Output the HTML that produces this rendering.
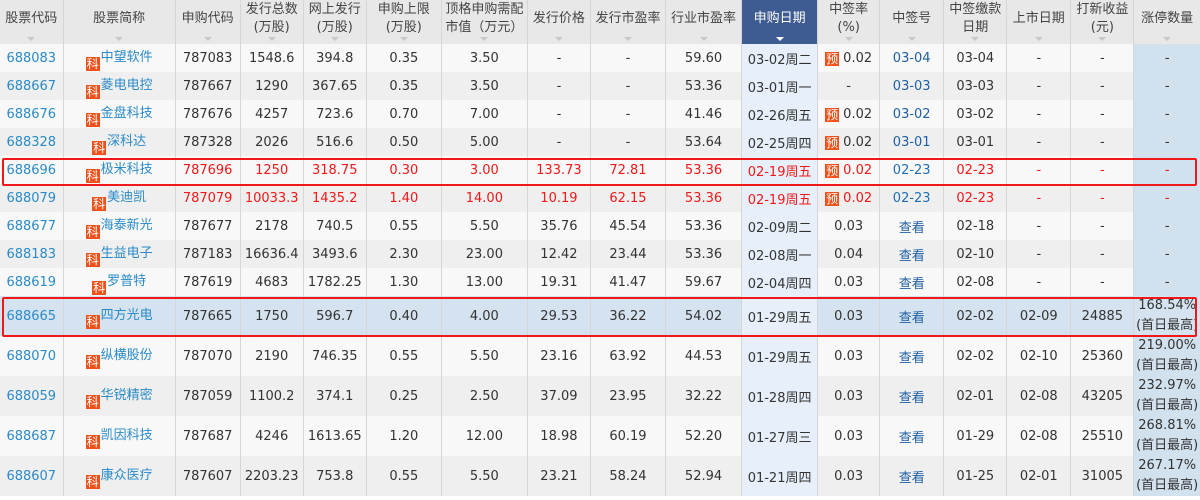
<!DOCTYPE html>
<html><head><meta charset="utf-8"><style>
*{margin:0;padding:0;box-sizing:border-box}
body{width:1200px;height:500px;overflow:hidden;background:#fff;font-family:"DejaVu Sans","Noto Sans CJK SC",sans-serif;font-size:13px;color:#333;position:relative}
table{border-collapse:collapse;table-layout:fixed;width:1200px}
td,th{border-left:1px solid #d6d6d6;text-align:center;white-space:nowrap;overflow:visible;padding:0}
td:first-child,th:first-child{border-left:none}
th{background:#e8e8e8;font-weight:normal;height:44px;color:#444;line-height:18px;position:relative;vertical-align:middle;padding-bottom:6px}
th:after{content:"";position:absolute;left:50%;bottom:3px;margin-left:-4px;border-left:4px solid transparent;border-right:4px solid transparent;border-top:4px solid #c8c8c8}
th.s{background:#3e5b92;color:#fff}
th.s:after{border-top-color:#fff}
tr.r td{height:28px}
tr.t td{height:40px}
tr:nth-child(even) td{background:#f8f8f8}
tr:nth-child(odd) td{background:#efefef}
tr td.d{background:#e7f0fa}
tr td.z{background:#d2e1ee}
tr.h td{background:#d4e3ef}
tr.h td.d{background:#e7f0fa}
.b{color:#2a8bc8}
.q{color:#1f5fa5}
.n{color:#2a8bc8;position:relative}
.k{display:inline-block;width:14px;height:14px;background:#f0501a;color:#fff;font-size:12px;line-height:14px;text-align:center;vertical-align:-7px;margin-right:1px}
.y{display:inline-block;width:14px;height:14px;background:#f0501a;color:#fff;font-size:12px;line-height:14px;text-align:center;vertical-align:-1px;margin-right:4px}
tr.red td{color:#f01818}
tr.red td.b,tr.red td.n{color:#2a8bc8}
tr.red td.q{color:#1f6fb5}
.zt{line-height:20px}
.box{position:absolute;left:2px;width:1195px;border:2px solid #f01818;border-radius:2px}
</style></head><body>
<table>
<colgroup><col style="width:63px"><col style="width:112px"><col style="width:65px"><col style="width:63px"><col style="width:63px"><col style="width:75px"><col style="width:86px"><col style="width:63px"><col style="width:75px"><col style="width:76px"><col style="width:76px"><col style="width:62px"><col style="width:64px"><col style="width:63px"><col style="width:64px"><col style="width:63px"><col style="width:66px"></colgroup>
<tr><th>股票代码</th><th>股票简称</th><th>申购代码</th><th>发行总数<br>(万股)</th><th>网上发行<br>(万股)</th><th>申购上限<br>(万股)</th><th>顶格申购需配<br>市值（万元）</th><th>发行价格</th><th>发行市盈率</th><th>行业市盈率</th><th class="s">申购日期</th><th>中签率<br>(%)</th><th>中签号</th><th>中签缴款<br>日期</th><th>上市日期</th><th>打新收益<br>(元)</th><th>涨停数量</th></tr>
<tr class="r"><td class="b">688083</td><td class="n"><span class="k">科</span>中望软件</td><td>787083</td><td>1548.6</td><td>394.8</td><td>0.35</td><td>3.50</td><td>-</td><td>-</td><td>59.60</td><td class="d">03-02周二</td><td><span class="y">预</span>0.02</td><td class="q">03-04</td><td>03-04</td><td>-</td><td>-</td><td class="z">-</td></tr>
<tr class="r"><td class="b">688667</td><td class="n"><span class="k">科</span>菱电电控</td><td>787667</td><td>1290</td><td>367.65</td><td>0.35</td><td>3.50</td><td>-</td><td>-</td><td>53.36</td><td class="d">03-01周一</td><td>-</td><td class="q">03-03</td><td>03-03</td><td>-</td><td>-</td><td class="z">-</td></tr>
<tr class="r"><td class="b">688676</td><td class="n"><span class="k">科</span>金盘科技</td><td>787676</td><td>4257</td><td>723.6</td><td>0.70</td><td>7.00</td><td>-</td><td>-</td><td>41.46</td><td class="d">02-26周五</td><td><span class="y">预</span>0.02</td><td class="q">03-02</td><td>03-02</td><td>-</td><td>-</td><td class="z">-</td></tr>
<tr class="r"><td class="b">688328</td><td class="n"><span class="k">科</span>深科达</td><td>787328</td><td>2026</td><td>516.6</td><td>0.50</td><td>5.00</td><td>-</td><td>-</td><td>53.64</td><td class="d">02-25周四</td><td><span class="y">预</span>0.02</td><td class="q">03-01</td><td>03-01</td><td>-</td><td>-</td><td class="z">-</td></tr>
<tr class="r red"><td class="b">688696</td><td class="n"><span class="k">科</span>极米科技</td><td>787696</td><td>1250</td><td>318.75</td><td>0.30</td><td>3.00</td><td>133.73</td><td>72.81</td><td>53.36</td><td class="d">02-19周五</td><td><span class="y">预</span>0.02</td><td class="q">02-23</td><td>02-23</td><td>-</td><td>-</td><td class="z">-</td></tr>
<tr class="r red"><td class="b">688079</td><td class="n"><span class="k">科</span>美迪凯</td><td>787079</td><td>10033.3</td><td>1435.2</td><td>1.40</td><td>14.00</td><td>10.19</td><td>62.15</td><td>53.36</td><td class="d">02-19周五</td><td><span class="y">预</span>0.02</td><td class="q">02-23</td><td>02-23</td><td>-</td><td>-</td><td class="z">-</td></tr>
<tr class="r"><td class="b">688677</td><td class="n"><span class="k">科</span>海泰新光</td><td>787677</td><td>2178</td><td>740.5</td><td>0.55</td><td>5.50</td><td>35.76</td><td>45.54</td><td>53.36</td><td class="d">02-09周二</td><td>0.03</td><td class="q">查看</td><td>02-18</td><td>-</td><td>-</td><td class="z">-</td></tr>
<tr class="r"><td class="b">688183</td><td class="n"><span class="k">科</span>生益电子</td><td>787183</td><td>16636.4</td><td>3493.6</td><td>2.30</td><td>23.00</td><td>12.42</td><td>23.44</td><td>53.36</td><td class="d">02-08周一</td><td>0.04</td><td class="q">查看</td><td>02-10</td><td>-</td><td>-</td><td class="z">-</td></tr>
<tr class="r"><td class="b">688619</td><td class="n"><span class="k">科</span>罗普特</td><td>787619</td><td>4683</td><td>1782.25</td><td>1.30</td><td>13.00</td><td>19.31</td><td>41.47</td><td>59.67</td><td class="d">02-04周四</td><td>0.03</td><td class="q">查看</td><td>02-08</td><td>-</td><td>-</td><td class="z">-</td></tr>
<tr class="t h"><td class="b">688665</td><td class="n"><span class="k">科</span>四方光电</td><td>787665</td><td>1750</td><td>596.7</td><td>0.40</td><td>4.00</td><td>29.53</td><td>36.22</td><td>54.02</td><td class="d">01-29周五</td><td>0.03</td><td class="q">查看</td><td>02-02</td><td>02-09</td><td>24885</td><td class="z zt">168.54%<br>(首日最高)</td></tr>
<tr class="t"><td class="b">688070</td><td class="n"><span class="k">科</span>纵横股份</td><td>787070</td><td>2190</td><td>746.35</td><td>0.55</td><td>5.50</td><td>23.16</td><td>63.92</td><td>44.53</td><td class="d">01-29周五</td><td>0.03</td><td class="q">查看</td><td>02-02</td><td>02-10</td><td>25360</td><td class="z zt">219.00%<br>(首日最高)</td></tr>
<tr class="t"><td class="b">688059</td><td class="n"><span class="k">科</span>华锐精密</td><td>787059</td><td>1100.2</td><td>374.1</td><td>0.25</td><td>2.50</td><td>37.09</td><td>23.95</td><td>32.22</td><td class="d">01-28周四</td><td>0.03</td><td class="q">查看</td><td>02-01</td><td>02-08</td><td>43205</td><td class="z zt">232.97%<br>(首日最高)</td></tr>
<tr class="t"><td class="b">688687</td><td class="n"><span class="k">科</span>凯因科技</td><td>787687</td><td>4246</td><td>1613.65</td><td>1.20</td><td>12.00</td><td>18.98</td><td>60.19</td><td>52.20</td><td class="d">01-27周三</td><td>0.03</td><td class="q">查看</td><td>01-29</td><td>02-08</td><td>25510</td><td class="z zt">268.81%<br>(首日最高)</td></tr>
<tr class="t"><td class="b">688607</td><td class="n"><span class="k">科</span>康众医疗</td><td>787607</td><td>2203.23</td><td>753.8</td><td>0.55</td><td>5.50</td><td>23.21</td><td>58.24</td><td>52.94</td><td class="d">01-21周四</td><td>0.03</td><td class="q">查看</td><td>01-25</td><td>02-01</td><td>31005</td><td class="z zt">267.17%<br>(首日最高)</td></tr>
</table>
<div class="box" style="top:158px;height:28px"></div>
<div class="box" style="top:297px;height:40px"></div>
</body></html>
